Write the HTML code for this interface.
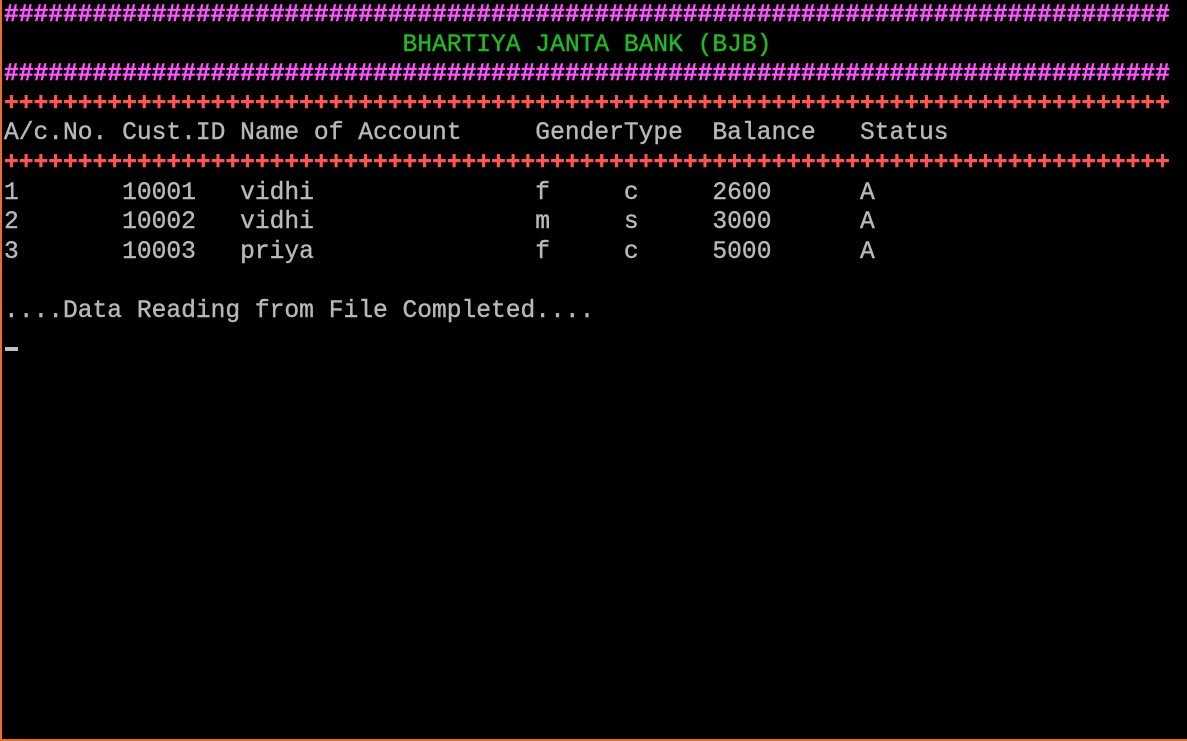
<!DOCTYPE html>
<html><head><meta charset="utf-8"><style>
html,body{margin:0;padding:0;background:#000;width:1187px;height:741px;overflow:hidden}
.s{position:absolute;left:0;top:0;width:1185px;height:739px;border-left:2px solid #e8702a;border-bottom:2px solid #e8702a;background:#000}
pre{position:absolute;left:4px;top:1px;margin:0;font-family:"Liberation Mono",monospace;font-size:24.6px;line-height:29.6px;color:#b8b8b8;white-space:pre;-webkit-text-stroke:0.4px currentColor}
.m{color:#ff55ff;font-weight:bold}.r{color:#ff5555;font-weight:bold}.g{color:#22b822}
.c{position:absolute;left:5px;top:347px;width:13px;height:4px;background:#c0c0c0}
</style></head><body><div class="s"></div>
<pre><span class="m">###############################################################################</span>
<span class="g">                           BHARTIYA JANTA BANK (BJB)</span>
<span class="m">###############################################################################</span>
<span class="r">+++++++++++++++++++++++++++++++++++++++++++++++++++++++++++++++++++++++++++++++</span>
A/c.No. Cust.ID Name of Account     GenderType  Balance   Status
<span class="r">+++++++++++++++++++++++++++++++++++++++++++++++++++++++++++++++++++++++++++++++</span>
1       10001   vidhi               f     c     2600      A
2       10002   vidhi               m     s     3000      A
3       10003   priya               f     c     5000      A

....Data Reading from File Completed....</pre>
<div class="c"></div>
</body></html>
